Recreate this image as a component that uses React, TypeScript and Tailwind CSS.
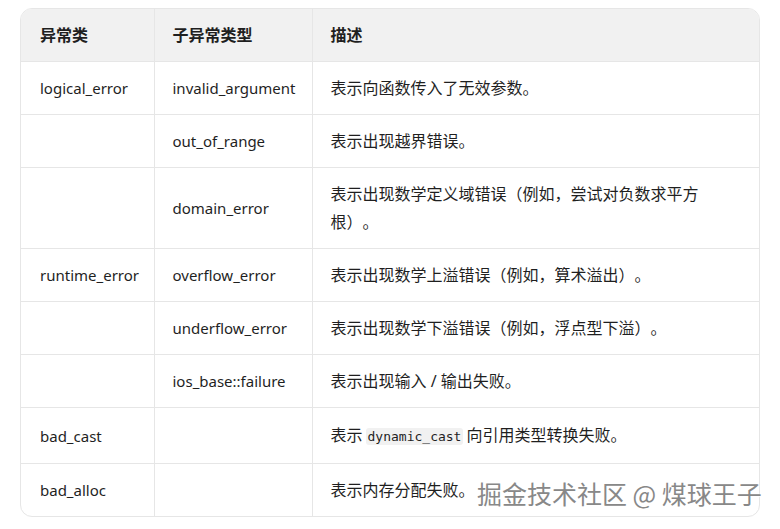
import React from "react";

const rows: { a: string; b: string; c: React.ReactNode; tall?: boolean }[] = [
  { a: "logical_error", b: "invalid_argument", c: "表示向函数传入了无效参数。" },
  { a: "", b: "out_of_range", c: "表示出现越界错误。" },
  { a: "", b: "domain_error", c: "表示出现数学定义域错误（例如，尝试对负数求平方根）。" },
  { a: "runtime_error", b: "overflow_error", c: "表示出现数学上溢错误（例如，算术溢出）。" },
  { a: "", b: "underflow_error", c: "表示出现数学下溢错误（例如，浮点型下溢）。" },
  { a: "", b: "ios_base::failure", c: "表示出现输入 / 输出失败。" },
  {
    a: "bad_cast",
    b: "",
    tall: true,
    c: (
      <>
        表示
        <code className="mx-[3px] rounded-[3px] bg-[#f1f1f1] px-[2px] py-[1px] text-[13px] font-['DejaVu_Sans_Mono',monospace]">
          dynamic_cast
        </code>
        向引用类型转换失败。
      </>
    ),
  },
  { a: "bad_alloc", b: "", c: "表示内存分配失败。" },
];

export default function App() {
  return (
    <div className="relative min-h-[529px] w-[780px] bg-white font-['Noto_Sans','Noto_Sans_CJK_SC',sans-serif] text-[15px] text-[#1f1f1f] [text-spacing-trim:space-all]">
      <div className="pl-[20px] pr-[20px] pt-[8px]">
        <div className="overflow-hidden rounded-[12px] border border-[#e6e6e6]">
          <table className="w-full border-collapse table-fixed">
            <colgroup>
              <col className="w-[133px]" />
              <col className="w-[158px]" />
              <col />
            </colgroup>
            <thead>
              <tr className="bg-[#f1f1f1]">
                <th className="border-b border-[#e6e6e6] px-[19px] py-3 text-left text-[16px] font-bold leading-7">异常类</th>
                <th className="border-b border-l border-[#e6e6e6] px-[18px] py-3 text-left text-[16px] font-bold leading-7">子异常类型</th>
                <th className="border-b border-l border-[#e6e6e6] px-[18px] py-3 text-left text-[16px] font-bold leading-7">描述</th>
              </tr>
            </thead>
            <tbody>
              {rows.map((r, i) => (
                <tr key={i} className={i < rows.length - 1 ? "border-b border-[#e6e6e6]" : ""}>
                  <td className={`px-[19px] leading-7 align-middle ${r.tall ? "py-[12.5px]" : "py-3"}`}>{r.a}</td>
                  <td className={`border-l border-[#e6e6e6] px-[18px] leading-7 align-middle ${r.tall ? "py-[12.5px]" : "py-3"}`}>{r.b}</td>
                  <td className={`border-l border-[#e6e6e6] pl-[18px] pr-[19px] text-[16px] leading-7 align-middle ${r.tall ? "py-[12.5px]" : "py-3"}`}>{r.c}</td>
                </tr>
              ))}
            </tbody>
          </table>
        </div>
      </div>
      <div className="absolute left-[477px] top-[477px] text-[25px] leading-8 text-[#888888] font-['Noto_Sans_CJK_SC',sans-serif] [text-shadow:0_0_2px_#fff,1px_1px_1px_#fff]">
        掘金技术社区 @ 煤球王子
      </div>
    </div>
  );
}
